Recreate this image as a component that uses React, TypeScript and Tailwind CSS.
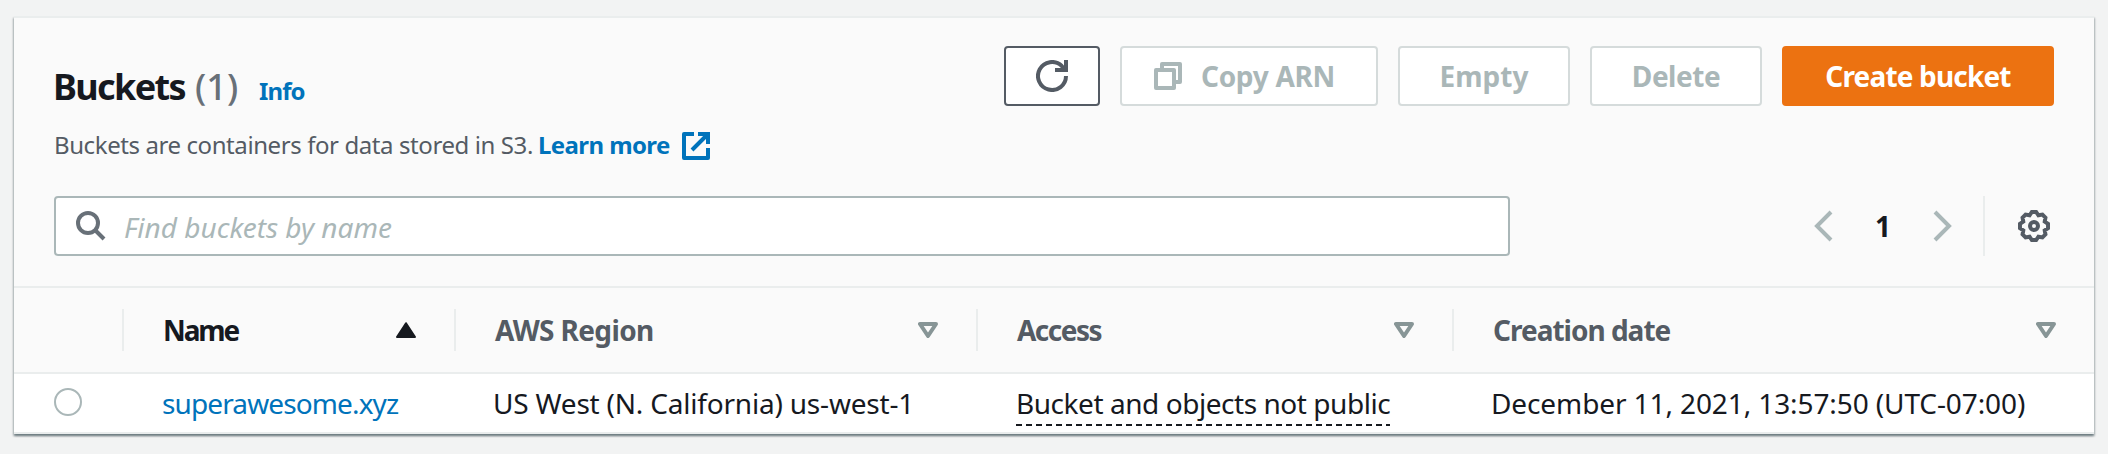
import type { ReactNode } from "react";

function RefreshIcon() {
  return (
    <svg width="32" height="32" viewBox="0 0 32 32" fill="none" stroke="currentColor" strokeWidth="4">
      <path d="M30 16a14 14 0 1 1-4.4-10.2L29 10" />
      <path d="M30 0v10H19" />
    </svg>
  );
}

function CopyIcon() {
  return (
    <svg width="28" height="28" viewBox="0 0 28 28" fill="none" stroke="currentColor" strokeWidth="4" strokeLinejoin="round">
      <path d="M2 8h18v18H2z" />
      <path d="M8 6V2h18v18h-4" />
    </svg>
  );
}

function ExternalIcon() {
  return (
    <svg width="28" height="28" viewBox="0 0 28 28" fill="none" stroke="currentColor" strokeWidth="4" strokeLinejoin="round">
      <path d="M12 2H2v24h24V16" />
      <path d="M16 2h10v10M26 2L10 18" strokeLinejoin="miter" />
    </svg>
  );
}

function SearchIcon() {
  return (
    <svg width="30" height="30" viewBox="0 0 30 30" fill="none" stroke="currentColor" strokeWidth="4">
      <circle cx="12" cy="12" r="10" />
      <path d="M19 19l9 9" />
    </svg>
  );
}

function Chevron({ right = false }: { right?: boolean }) {
  return (
    <svg width="20" height="32" viewBox="0 0 20 32" fill="none" stroke="currentColor" strokeWidth="4">
      <path d={right ? "M3 2l14 14L3 30" : "M17 2L3 16l14 14"} />
    </svg>
  );
}

const gearPoints = Array.from({ length: 8 }, (_, i) => {
  const a = (i * Math.PI) / 4;
  const polar = (r: number, t: number) => `${(16 + r * Math.cos(t)).toFixed(2)},${(16 + r * Math.sin(t)).toFixed(2)}`;
  return [polar(14.2, a - 0.15), polar(14.2, a + 0.15), polar(11.6, a + Math.PI / 8)].join(" ");
}).join(" ");

function GearIcon() {
  return (
    <svg width="32" height="32" viewBox="0 0 32 32" fill="none" stroke="currentColor" strokeWidth="4">
      <polygon points={gearPoints} />
      <circle cx="16" cy="16" r="4" />
    </svg>
  );
}

function SortIcon({ up = false }: { up?: boolean }) {
  return up ? (
    <svg width="20" height="16" viewBox="0 0 20 16" fill="#16191f" stroke="#16191f" strokeWidth="2" strokeLinejoin="round">
      <path d="M10 1.2L19 15H1z" />
    </svg>
  ) : (
    <svg width="20" height="16" viewBox="0 0 20 16" fill="none" stroke="#879596" strokeWidth="4" strokeLinejoin="round">
      <path d="M2 2h16l-8 12z" />
    </svg>
  );
}

function Button({ children, className }: { children: ReactNode; className: string }) {
  return (
    <button className={`flex h-[60px] items-center justify-center rounded-[4px] border-2 text-[28px] font-bold leading-none ${className}`}>
      {children}
    </button>
  );
}

function HeaderCell({ label, className, up = false }: { label: string; className: string; up?: boolean }) {
  return (
    <div className={`flex h-[42px] items-center justify-between border-l-2 border-[#eaeded] pl-[39px] font-bold ${className}`}>
      <span>{label}</span>
      <SortIcon up={up} />
    </div>
  );
}

export default function App() {
  return (
    <div className="h-[454px] w-[2108px] overflow-hidden whitespace-nowrap bg-[#f2f3f3] pl-[14px] pt-[16px] font-['Noto_Sans','Open_Sans',sans-serif] text-[#16191f]">
      <section className="h-[418px] w-[2080px] border-y-2 border-[#eaeded] bg-[#fafafa] shadow-[0_2px_2px_0_rgba(0,28,36,0.3),1px_2px_2px_0_rgba(0,28,36,0.2),-1px_2px_2px_0_rgba(0,28,36,0.2)]">
        <header className="flex h-[178px] justify-between pl-[40px] pr-[40px] pt-[28px]">
          <div className="pt-[15px]">
            <div className="flex h-[52px] items-baseline leading-[52px]">
              <h2 className="-ml-[1px] w-[142px] text-[36px] font-bold tracking-[-1.64px]">Buckets</h2>
              <span className="w-[64px] text-[36px] font-medium tracking-[0.1px] text-[#687078]">(1)</span>
              <a className="text-[24px] font-bold tracking-[-0.9px] text-[#0073bb]">Info</a>
            </div>
            <div className="mt-[13px] flex h-[40px] items-center text-[24px] leading-[40px]">
              <span className="mb-[2px] w-[484px] tracking-[-0.41px] text-[#545b64]">Buckets are containers for data stored in S3.</span>
              <a className="flex items-center text-[#0073bb]">
                <span className="mb-[2px] w-[144px] font-bold tracking-[-0.59px]">Learn more</span>
                <ExternalIcon />
              </a>
            </div>
          </div>
          <div className="flex gap-[20px]">
            <Button className="w-[96px] border-[#545b64] bg-white text-[#545b64]">
              <RefreshIcon />
            </Button>
            <Button className="w-[258px] gap-[19px] border-[#d5dbdb] bg-white pr-[9px] tracking-[-0.29px] text-[#aab7b8]">
              <CopyIcon />
              <span>Copy ARN</span>
            </Button>
            <Button className="w-[172px] border-[#d5dbdb] bg-white text-[#aab7b8]">Empty</Button>
            <Button className="w-[172px] border-[#d5dbdb] bg-white tracking-[-0.48px] text-[#aab7b8]">Delete</Button>
            <Button className="w-[272px] border-[#ec7211] bg-[#ec7211] tracking-[-0.83px] text-white">Create bucket</Button>
          </div>
        </header>
        <div className="flex h-[92px] items-start justify-between border-b-2 border-[#eaeded] pl-[40px] pr-[40px]">
          <div className="flex h-[60px] w-[1456px] items-center rounded-[4px] border-2 border-[#aab7b8] bg-white pl-[20px] text-[#687078]">
            <SearchIcon />
            <span className="ml-[18px] pt-[2px] text-[28px] italic leading-none text-[#aab7b8]">Find buckets by name</span>
          </div>
          <div className="flex h-[60px] items-center text-[#aab7b8]">
            <Chevron />
            <span className="w-[98px] text-center text-[28px] font-bold leading-none text-[#16191f]">1</span>
            <Chevron right />
            <span className="ml-[31px] h-[60px] w-[2px] bg-[#eaeded]" />
            <span className="ml-[33px] mr-[4px] text-[#545b64]">
              <GearIcon />
            </span>
          </div>
        </div>
        <div className="flex h-[86px] items-center border-b-2 border-[#eaeded] pl-[108px] text-[28px] leading-[42px] text-[#545b64]">
          <HeaderCell label="Name" up className="w-[332px] pr-[38px] tracking-[-2.1px] text-[#16191f]" />
          <HeaderCell label="AWS Region" className="w-[522px] pr-[38px] tracking-[-0.63px]" />
          <HeaderCell label="Access" className="w-[476px] pr-[38px] tracking-[-1.51px]" />
          <HeaderCell label="Creation date" className="w-[604px] pr-0 tracking-[-1px]" />
        </div>
        <div className="flex h-[58px] items-start bg-white pl-[40px] pt-[9px] text-[28px] leading-[40px]">
          <span className="mt-[5px] h-[28px] w-[28px] rounded-full border-2 border-[#aab7b8] bg-white" />
          <a className="ml-[80px] w-[331px] tracking-[-0.88px] text-[#0073bb]">superawesome.xyz</a>
          <span className="w-[523px] tracking-[-0.2px]">US West (N. California) us-west-1</span>
          <span className="w-[475px]">
            <span className="block tracking-[-0.45px]">Bucket and objects not public</span>
            <span className="mt-px block h-[2px] w-[374px] bg-[repeating-linear-gradient(90deg,#16191f_0px,#16191f_6px,transparent_6px,transparent_10px)]" />
          </span>
          <span className="tracking-[-0.1px]">December 11, 2021, 13:57:50 (UTC-07:00)</span>
        </div>
      </section>
    </div>
  );
}
